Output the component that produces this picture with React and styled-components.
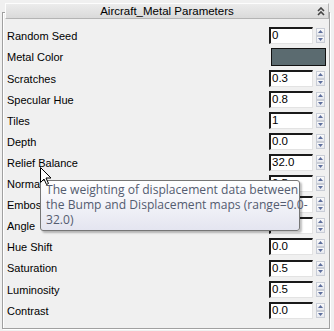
import React from "react";
import styled, { createGlobalStyle } from "styled-components";

const GlobalStyle = createGlobalStyle`
  html, body {
    margin: 0;
    padding: 0;
    background: #f0f0f0;
  }
  #root {
    width: 334px;
    height: 331px;
    overflow: hidden;
  }
`;

//Styled parts-----------------------------------------
const Page = styled.div`
  position: relative;
  width: 334px;
  height: 331px;
  padding: 3px 0 0 2px;
  box-sizing: border-box;
  background: #f0f0f0;
  font-family: "Liberation Sans", Arial, sans-serif;
  font-size: 11px;
  color: #000;
`;

const Header = styled.div`
  position: relative;
  z-index: 2;
  margin: 0 5px 0 3px;
  height: 16px;
  box-sizing: border-box;
  border: 1px solid #b4b4b4;
  border-top-color: #fdfdfd;
  border-left-color: #fdfdfd;
  background: linear-gradient(#ececec, #dadada);
  display: flex;
  align-items: center;
  justify-content: center;
  font-size: 11.5px;
`;

const Chevron = styled.svg`
  position: absolute;
  right: 3px;
  top: 3px;
`;

const Frame = styled.div`
  margin-top: -7px;
  width: 328px;
  height: 317px;
  box-sizing: border-box;
  border: 1px solid #a0a0a0;
  box-shadow: inset 1px 1px 0 #fff, 1px 1px 0 #fff;
  padding: 12px 0 0 4px;
`;

const Rows = styled.div`
  display: flex;
  flex-direction: column;
`;

const Row = styled.div`
  display: flex;
  align-items: center;
  height: ${(p) => (p.tall ? 22 : 21)}px;
`;

const Label = styled.span`
  flex: 1;
  white-space: nowrap;
`;

const Field = styled.div`
  display: flex;
  align-items: center;
  margin-right: 4px;
`;

const NumBox = styled.div`
  width: 44px;
  height: 17px;
  box-sizing: border-box;
  background: #fff;
  border: 1px solid #fff;
  border-top: 2px solid #1a1a1a;
  border-left: 2px solid #1a1a1a;
  border-right-color: #e3e3e3;
  border-bottom-color: #e3e3e3;
  padding-left: 1px;
  line-height: 13px;
  font-size: 11.5px;
`;

const Spinner = styled.div`
  display: flex;
  flex-direction: column;
  margin-left: 3px;
  width: 9px;
  height: 15px;
`;

const SpinHalf = styled.div`
  flex: 1;
  box-sizing: border-box;
  border: 1px solid #c9cdd6;
  background: linear-gradient(#fbfbfb, #e6e8ee);
  display: flex;
  align-items: center;
  justify-content: center;
`;

const Swatch = styled.div`
  width: 55px;
  height: 18px;
  box-sizing: border-box;
  border: 1px solid #111;
  background: #5b6b70;
  margin-right: 3px;
`;

const Tooltip = styled.div`
  position: absolute;
  left: 40px;
  top: 180px;
  width: 260px;
  height: 51px;
  box-sizing: border-box;
  border: 1px solid #767676;
  border-radius: 3px;
  background: linear-gradient(#ffffff, #e4e5f0);
  box-shadow: 2px 2px 2px rgba(0, 0, 0, 0.25);
  padding: 1px 0 0 5px;
  font-family: "Open Sans", "Noto Sans", sans-serif;
  font-size: 12.1px;
  line-height: 15px;
  color: #545c70;
  white-space: nowrap;
  z-index: 5;
`;

const Cursor = styled.svg`
  position: absolute;
  left: 40px;
  top: 167px;
  z-index: 6;
`;
//---------------------------------------------------------

const params = [
  { label: "Random Seed", value: "0" },
  { label: "Metal Color", color: true },
  { label: "Scratches", value: "0.3" },
  { label: "Specular Hue", value: "0.8" },
  { label: "Tiles", value: "1" },
  { label: "Depth", value: "0.0" },
  { label: "Relief Balance", value: "32.0" },
  { label: "Normal", value: "0.5" },
  { label: "Emboss", value: "0.5" },
  { label: "Angle", value: "0.0" },
  { label: "Hue Shift", value: "0.0" },
  { label: "Saturation", value: "0.5", tall: true },
  { label: "Luminosity", value: "0.5" },
  { label: "Contrast", value: "0.0" },
];

const Arrow = ({ up }) => (
  <svg width="5" height="3" viewBox="0 0 5 3">
    <path d={up ? "M0 3 L2.5 0 L5 3 Z" : "M0 0 L2.5 3 L5 0 Z"} fill="#5d6e9c" />
  </svg>
);

const NumField = ({ value }) => (
  <Field>
    <NumBox>{value}</NumBox>
    <Spinner>
      <SpinHalf>
        <Arrow up />
      </SpinHalf>
      <SpinHalf>
        <Arrow />
      </SpinHalf>
    </Spinner>
  </Field>
);

export default function App() {
  return (
    <Page>
      <GlobalStyle />
      <Header>
        Aircraft_Metal Parameters
        <Chevron width="8" height="9" viewBox="0 0 8 9">
          <path d="M1 4 L4 1 L7 4 M1 8 L4 5 L7 8" stroke="#444" strokeWidth="1.6" fill="none" />
        </Chevron>
      </Header>
      <Frame>
        <Rows>
          {params.map((p) => (
            <Row key={p.label} tall={p.color || p.tall}>
              <Label>{p.label}</Label>
              {p.color ? <Swatch /> : <NumField value={p.value} />}
            </Row>
          ))}
        </Rows>
      </Frame>
      <Cursor width="12" height="19" viewBox="0 0 12 19">
        <path d="M0.5 0.5 L0.5 15.5 L4 12 L6.5 17.5 L8.5 16.5 L6 11 L11 11 Z" fill="#fff" stroke="#000" strokeWidth="1" />
      </Cursor>
      <Tooltip>
        The weighting of displacement data between
        <br />
        the Bump and Displacement maps (range=0.0-
        <br />
        32.0)
      </Tooltip>
    </Page>
  );
}
